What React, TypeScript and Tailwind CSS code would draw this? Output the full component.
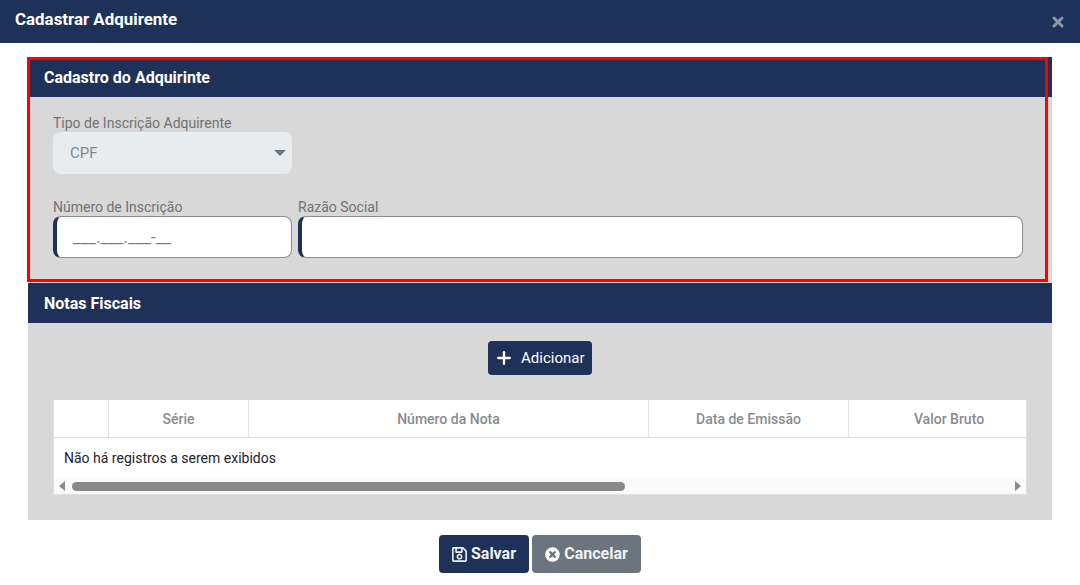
import { Plus, X } from "lucide-react"
import { FaRegSave, FaTimesCircle } from "react-icons/fa"

function SectionBar({ title }: { title: string }) {
  return (
    <div className="h-10 bg-[#1e3158] pl-4 pt-[1px] flex items-center text-white text-base font-bold">{title}</div>
  )
}

function Field({ label, width, mask }: { label: string; width: string; mask?: string }) {
  return (
    <div className={width}>
      <div className="h-4 leading-4 text-sm text-[#707274] whitespace-nowrap">{label}</div>
      <div className="h-[42px] mt-[1px] bg-white rounded-lg border border-[#8a8d91] border-l-[4px] border-l-[#1e3158] pl-[16px] pt-[2px] flex items-center text-[17px] text-[#777b80]">
        {mask}
      </div>
    </div>
  )
}

export default function App() {
  return (
    <div className="relative w-[1080px] h-[585px] overflow-hidden bg-white font-['Roboto',sans-serif]">
      {/* Modal header */}
      <div className="h-[43px] bg-[#1e3158] pl-[15px] pr-[14px] flex items-center justify-between">
        <span className="text-white text-[16.9px] font-bold -mt-[4px]">Cadastrar Adquirente</span>
        <X className="w-[16px] h-[16px] text-[#8c96ab]" strokeWidth={4.5} />
      </div>

      <div className="pt-[14px] pl-[28px] w-[1052px]">
        {/* Cadastro do Adquirinte */}
        <SectionBar title="Cadastro do Adquirinte" />
        <div className="h-[186px] bg-[#d8d8d8] pl-[25px] pt-[18px]">
          <div className="w-[239px]">
            <div className="h-4 leading-4 text-sm text-[#707274] whitespace-nowrap">Tipo de Inscrição Adquirente</div>
            <div className="h-[42px] mt-[1px] bg-[#e9ecef] rounded-lg pl-[17px] pr-[6px] flex items-center justify-between text-[15px] text-[#82888e]">
              CPF
              <svg width="12" height="6" viewBox="0 0 12 6">
                <path d="M0 0h12L6 6z" fill="#6c757d" />
              </svg>
            </div>
          </div>
          <div className="flex gap-[6px] mt-[25px]">
            <Field label="Número de Inscrição" width="w-[239px]" mask="___.___.___-__" />
            <Field label="Razão Social" width="w-[725px]" />
          </div>
        </div>

        {/* Notas Fiscais */}
        <SectionBar title="Notas Fiscais" />
        <div className="h-[197px] bg-[#d8d8d8] pl-[25px] pt-[18px]">
          <div className="w-[974px] flex justify-center">
            <button className="h-[34px] w-[104px] bg-[#1e3158] rounded text-white text-[15px] flex items-center pl-[6px] gap-[7px]">
              <Plus className="w-[20px] h-[20px]" strokeWidth={2.8} />
              Adicionar
            </button>
          </div>

          <div className="mt-[25px] w-[974px] h-[95px] bg-white border border-[#dee2e6] border-t-0 flex flex-col overflow-hidden">
            <div className="h-[38px] flex border-b border-[#dee2e6] text-sm font-medium text-[#888c91]">
              <div className="w-[55px] shrink-0 border-r border-[#dee2e6]" />
              <div className="w-[140px] shrink-0 border-r border-[#dee2e6] flex items-center justify-center pt-[1px]">Série</div>
              <div className="w-[400px] shrink-0 border-r border-[#dee2e6] flex items-center justify-center pt-[1px]">Número da Nota</div>
              <div className="w-[200px] shrink-0 border-r border-[#dee2e6] flex items-center justify-center pt-[1px]">Data de Emissão</div>
              <div className="w-[200px] shrink-0 flex items-center justify-center pt-[1px]">Valor Bruto</div>
            </div>
            <div className="flex-1 pl-[10px] pt-[12px] text-sm leading-4 text-[#212529]">Não há registros a serem exibidos</div>
            <div className="h-[16px] bg-[#fafafa] flex items-center pl-[4px] pr-[4px] justify-between">
              <div className="flex items-center gap-[6px]">
                <svg width="8" height="10" viewBox="0 0 8 10"><path d="M7 0v10L1 5z" fill="#8a8a8a" /></svg>
                <div className="w-[553px] h-[9px] rounded-full bg-[#8a8a8a]" />
              </div>
              <svg width="8" height="10" viewBox="0 0 8 10"><path d="M1 0v10l6-5z" fill="#8a8a8a" /></svg>
            </div>
          </div>
        </div>

        {/* Footer actions */}
        <div className="flex justify-center gap-[3px] pt-[15px]">
          <button className="h-[38px] w-[90px] bg-[#1e3158] rounded text-[#f0f2f5] text-base font-bold flex items-center justify-center gap-[4px]">
            <FaRegSave className="w-[15px] h-[17px]" />
            Salvar
          </button>
          <button className="h-[38px] w-[109px] bg-[#6c757d] rounded text-[#f0f2f5] text-base font-bold flex items-center justify-center gap-[4px]">
            <FaTimesCircle className="w-[15px] h-[15px] text-white" />
            Cancelar
          </button>
        </div>
      </div>

      {/* Red highlight over the first section */}
      <div className="absolute left-[27px] top-[57px] w-[1021px] h-[225px] border-[3px] border-[#f00] pointer-events-none" />
    </div>
  )
}
